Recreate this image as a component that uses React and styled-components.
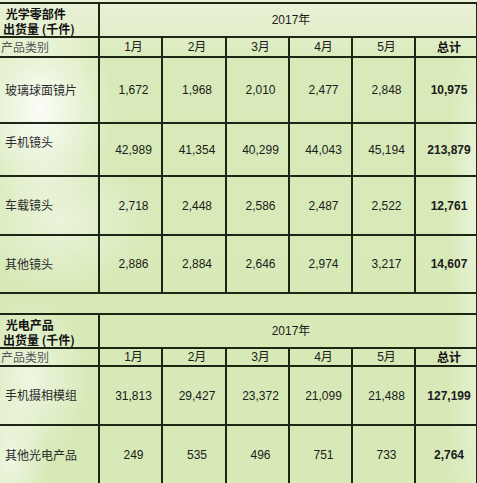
import React from "react";
import styled, { createGlobalStyle } from "styled-components";

const Global = createGlobalStyle`
  html, body { margin: 0; padding: 0; background: #e6e9e1; overflow: hidden; }
  body { width: 477px; height: 483px; }
`;

const Page = styled.div`
  width: 477px;
  height: 483px;
  overflow: hidden;
  padding-top: 2px;
  box-sizing: border-box;
  background:
    radial-gradient(ellipse 75px 100px at 40px 110px, rgba(255,255,255,0.9), rgba(255,255,255,0) 100%),
    radial-gradient(ellipse 90px 70px at 60px 220px, rgba(255,255,255,0.5), rgba(255,255,255,0) 100%),
    radial-gradient(ellipse 60px 80px at 30px 380px, rgba(255,255,255,0.6), rgba(255,255,255,0) 100%),
    radial-gradient(ellipse 40px 70px at 10px 460px, rgba(255,255,255,0.6), rgba(255,255,255,0) 100%),
    radial-gradient(ellipse 30px 200px at 477px 200px, rgba(255,255,255,0.5), rgba(255,255,255,0) 100%),
    radial-gradient(ellipse 30px 150px at 477px 420px, rgba(255,255,255,0.35), rgba(255,255,255,0) 100%),
    linear-gradient(180deg, #e9f1d6 0px, #e3efcb 32px, #d8eab9 60px, #d6e9b6 100%);
`;

const Table = styled.table`
  border-collapse: collapse;
  table-layout: fixed;
  width: 481px;
  margin-left: -5px;
  font-family: "Liberation Sans", Arial, "Noto Sans CJK SC", sans-serif;
  font-size: 12px;
  color: #1b1b1b;
`;

const Cell = styled.td`
  border: 2px solid #1d2614;
  padding: 0;
  height: ${(p) => p.$h}px;
  box-sizing: border-box;
  text-align: ${(p) => (p.$left ? "left" : "center")};
  vertical-align: ${(p) => (p.$top ? "top" : "middle")};
  padding-left: ${(p) => (p.$left ? 8 : 6)}px;
  padding-top: ${(p) => (p.$top ? 11 : 0)}px;
  font-weight: ${(p) => (p.$bold ? 700 : 400)};
  line-height: 14px;
  white-space: nowrap;
  overflow: visible;
`;

const TitleCell = styled(Cell)`
  padding-left: 6px;
  padding-top: 2px;
`;

const TitleText = styled.div`
  font-family: "Noto Sans CJK SC", sans-serif;
  font-weight: 700;
  font-size: 12px;
  line-height: 15px;
  color: #111;
  white-space: pre;
`;

const Label = styled.span`
  font-family: "Noto Sans CJK SC", sans-serif;
  font-size: 12px;
  color: ${(p) => p.$color || "#2a2a2a"};
  font-weight: ${(p) => (p.$bold ? 700 : 400)};
`;

const CategoryCell = styled(Cell)`
  padding-left: 4px;
`;

const GapCell = styled.td`
  border: 2px solid #1d2614;
  height: ${(p) => p.$h}px;
  padding: 0;
`;

const Month = styled.span`
  font-family: "Liberation Sans", "Noto Sans CJK SC", sans-serif;
  font-size: 12px;
`;

const cols = [103, 63, 64, 63, 63, 63, 62];
const months = ["1月", "2月", "3月", "4月", "5月"];

function Section({ title, heights, rows }) {
  return (
    <>
      <tr>
        <TitleCell $h={heights[0]} $left $top>
          <TitleText>{` ${title}\n出货量 (千件)`}</TitleText>
        </TitleCell>
        <Cell $h={heights[0]} colSpan={6}>
          <Month>2017年</Month>
        </Cell>
      </tr>
      <tr>
        <CategoryCell $h={heights[1]} $left>
          <Label $color="#555">产品类别</Label>
        </CategoryCell>
        {months.map((m) => (
          <Cell key={m} $h={heights[1]}>
            <Month>{m}</Month>
          </Cell>
        ))}
        <Cell $h={heights[1]}>
          <Label $bold $color="#111">总计</Label>
        </Cell>
      </tr>
      {rows.map((r) => (
        <tr key={r.name}>
          <Cell $h={r.h} $left $top={r.top}>
            <Label>{r.name}</Label>
          </Cell>
          {r.values.map((v, j) => (
            <Cell key={j} $h={r.h}>
              {v}
            </Cell>
          ))}
          <Cell $h={r.h} $bold>
            {r.total}
          </Cell>
        </tr>
      ))}
    </>
  );
}

export default function App() {
  return (
    <Page>
      <Global />
      <Table>
        <colgroup>
          {cols.map((w, i) => (
            <col key={i} style={{ width: w }} />
          ))}
        </colgroup>
        <tbody>
          <Section
            title="光学零部件"
            heights={[30, 20]}
            rows={[
              { name: "玻璃球面镜片", h: 66, values: ["1,672", "1,968", "2,010", "2,477", "2,848"], total: "10,975" },
              { name: "手机镜头", h: 53, top: true, values: ["42,989", "41,354", "40,299", "44,043", "45,194"], total: "213,879" },
              { name: "车载镜头", h: 59, values: ["2,718", "2,448", "2,586", "2,487", "2,522"], total: "12,761" },
              { name: "其他镜头", h: 58, values: ["2,886", "2,884", "2,646", "2,974", "3,217"], total: "14,607" },
            ]}
          />
          <tr>
            <GapCell $h={19} colSpan={7} />
          </tr>
          <Section
            title="光电产品"
            heights={[34, 18]}
            rows={[
              { name: "手机摄相模组", h: 59, values: ["31,813", "29,427", "23,372", "21,099", "21,488"], total: "127,199" },
              { name: "其他光电产品", h: 60, values: ["249", "535", "496", "751", "733"], total: "2,764" },
            ]}
          />
        </tbody>
      </Table>
    </Page>
  );
}
